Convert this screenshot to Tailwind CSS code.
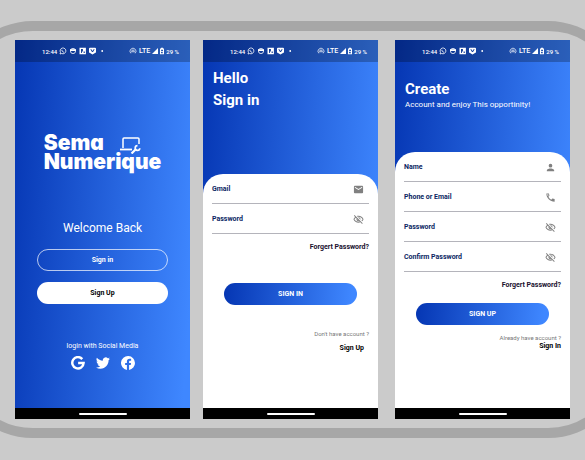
<!DOCTYPE html>
<html lang="en">
<head>
<meta charset="utf-8">
<meta name="viewport" content="width=device-width, initial-scale=1">
<title>Sema Numerique</title>
<script src="https://cdn.jsdelivr.net/npm/@tailwindcss/browser@4"></script>
</head>
<body class="min-h-screen bg-[#cbcbcb] font-['Roboto','Liberation_Sans',sans-serif] text-white">

<svg class="hidden" aria-hidden="true">
  <symbol id="notifications" viewBox="0 0 46 8">
    <g fill="none" stroke="#fff">
      <path d="M1 7l.5-1.6A2.9 2.9 0 1 1 2.700 6.500z" stroke-width=".8"/>
      <path d="M2.900 2.800c0 1.400 1 2.300 2.300 2.500" stroke-width=".9"/>
      <circle cx="14" cy="4" r="2.600" stroke-width=".8"/>
    </g>
    <path d="M11 2.200h6v1.800h-6z" fill="#fff"/>
    <path fill="#fff" fill-rule="evenodd" d="M20.500.7h6.400v6.600h-6.400zM22 2v4h.9V4.500h1V2zm2.600 2.600v1.300h1.200V4.600z"/>
    <path fill="#fff" fill-rule="evenodd" d="M31 .7h5a1 1 0 0 1 1 1V5a1 1 0 0 1-1 1l-2.500 1.400L31 6a1 1 0 0 1-1-1V1.700a1 1 0 0 1 1-1zm.3 1.500 1.700 2.900h1l1.700-2.900h-1.100l-1.100 1.900-1.100-1.900z"/>
    <circle cx="43.200" cy="4" r=".9" fill="#fff"/>
  </symbol>
  <symbol id="hotspot" viewBox="0 0 8 8">
    <g fill="none" stroke="#fff" stroke-width=".7"><path d="M1.800 6.300a3 3 0 1 1 4.400 0"/><path d="M2.900 5.500a1.500 1.500 0 1 1 2.200 0"/></g>
    <circle cx="4" cy="4.500" r=".7" fill="#fff"/>
  </symbol>
  <symbol id="signal" viewBox="0 0 12 8">
    <path fill="#fff" d="M0 7 6 1v6z"/>
    <path fill="#fff" fill-rule="evenodd" d="M9 .8h2v.8h1v5.600H8V1.600h1zM9 2.700v1l1.500.6L9 5v1.200h2V5.400L9.700 4.700 11 4V2.700z"/>
  </symbol>
  <symbol id="mail" viewBox="0 0 24 24"><path d="M20 4H4a2 2 0 0 0-2 2v12a2 2 0 0 0 2 2h16a2 2 0 0 0 2-2V6a2 2 0 0 0-2-2zm0 4-8 5-8-5V6l8 5 8-5z"/></symbol>
  <symbol id="person" viewBox="0 0 24 24"><path d="M12 12a4 4 0 1 0 0-8 4 4 0 0 0 0 8zm0 2c-2.670 0-8 1.340-8 4v2h16v-2c0-2.660-5.330-4-8-4z"/></symbol>
  <symbol id="phone" viewBox="0 0 24 24"><path d="M3 3c0 9.940 8.060 18 18 18v-5.500l-5-1.200-2.400 2.400a15 15 0 0 1-6.300-6.300L9.700 8 8.500 3zM5 5h1.900l.6 2.500-1.300 1.300C5.500 7.600 5.100 6.300 5 5z"/></symbol>
  <symbol id="eye-off" viewBox="0 0 24 24"><path d="M12 6c3.790 0 7.170 2.130 8.820 5.500a9.770 9.770 0 0 1-2.410 3.120l1.410 1.410A11.800 11.800 0 0 0 23 11.500C21.270 7.110 17 4 12 4c-1.270 0-2.490.2-3.640.57l1.650 1.650C10.660 6.090 11.320 6 12 6zm-1.070 1.140L13 9.210c.57.25 1.030.71 1.280 1.280l2.070 2.070c.08-.34.14-.7.14-1.070A4.480 4.480 0 0 0 12 7c-.37 0-.72.05-1.070.14zM2.010 3.870l2.680 2.680A11.740 11.740 0 0 0 1 11.500C2.730 15.890 7 19 12 19c1.520 0 2.980-.29 4.320-.82l3.420 3.420 1.410-1.410L3.420 2.450zm7.500 7.500 2.610 2.610c-.04.01-.08.02-.12.02a2.500 2.500 0 0 1-2.500-2.500zm-3.400-3.400 1.750 1.750a4.600 4.600 0 0 0-.36 1.780 4.500 4.500 0 0 0 6.270 4.140l.98.98c-.88.24-1.800.38-2.750.38-3.790 0-7.170-2.130-8.820-5.500.7-1.430 1.720-2.610 2.930-3.530z"/></symbol>
</svg>

<div class="overflow-hidden pt-[21px]">
<main class="-mr-[43px] -ml-[47px] flex gap-[13px] rounded-[80px] border-[10px] border-[#a7a7a7] py-[9px] pr-12 pl-[52px]">

  <section aria-label="Welcome" class="flex min-w-0 flex-1 flex-col bg-linear-[94deg,#0536b3,#3f87ff_96%]">
    <header class="flex h-[22px] items-center bg-black/25 pr-[11px] pl-[27px] text-[6px] font-medium">
      <span class="w-[17px]">12:44</span>
      <svg class="h-2 w-[46px]" aria-hidden="true"><use href="#notifications"/></svg>
      <svg class="ml-auto h-2 w-2" aria-hidden="true"><use href="#hotspot"/></svg>
      <span class="ml-[2px] text-[7px]">LTE</span>
      <svg class="ml-[2px] h-2 w-3" aria-hidden="true"><use href="#signal"/></svg>
      <span class="ml-[2px] whitespace-nowrap">29 %</span>
    </header>
    <div class="flex min-h-[346px] flex-1 flex-col items-center px-[22px] pt-[71px]">
      <h1 class="relative font-['Inter','Liberation_Sans',sans-serif] text-[21px] leading-[19px] font-black [font-feature-settings:'cv11']"><span class="block">Sema</span><span class="block">Numerique</span>
        <svg class="absolute top-[3px] right-[20px] h-[18px] w-[22px]" viewBox="0 0 22 18" fill="none" stroke="#fff" aria-hidden="true">
          <path d="M4 12V3a1 1 0 0 1 1-1h14a1 1 0 0 1 1 1v5" stroke-width="1.500"/>
          <path d="M1 13.500h12" stroke-width="1.800"/>
          <path d="M12.500 17.500 17 13" stroke-width="2.200"/>
          <path d="M18.500 9.700a2.300 2.300 0 1 0 2.300 2.500" stroke-width="1.700"/>
        </svg>
      </h1>
      <h2 class="mt-[49px] text-[12px] leading-4">Welcome Back</h2>
      <button type="button" class="mt-[13px] h-[22px] w-full rounded-full border border-white/70 pt-px text-[7px] font-bold">Sign in</button>
      <button type="button" class="mt-[11px] h-[22px] w-full rounded-full bg-white pt-px text-[7px] font-bold text-black">Sign Up</button>
      <p class="mt-[38px] text-[7px] leading-2">login with Social Media</p>
      <nav aria-label="Social login" class="mt-[6px] flex gap-[11px]">
        <a href="#google" aria-label="Google"><svg class="h-[14px] w-[14px]" viewBox="0 0 24 24" fill="none" stroke="#fff" stroke-width="4.200" aria-hidden="true"><path d="M19.300 5.300A9.700 9.700 0 1 0 21.600 12H12.200"/></svg></a>
        <a href="#twitter" aria-label="Twitter"><svg class="h-[14px] w-[14px]" viewBox="0 0 24 24" fill="#fff" aria-hidden="true"><path d="M23.950 4.570a10 10 0 0 1-2.820.77 4.960 4.960 0 0 0 2.160-2.720c-.95.550-2 .95-3.130 1.180a4.920 4.920 0 0 0-8.380 4.480C7.690 8.100 4.070 6.130 1.640 3.160a4.920 4.920 0 0 0 1.520 6.570 4.900 4.900 0 0 1-2.230-.61v.06a4.920 4.920 0 0 0 3.950 4.830 5 5 0 0 1-2.210.08 4.940 4.940 0 0 0 4.600 3.420A9.870 9.870 0 0 1 0 19.540a13.990 13.990 0 0 0 7.550 2.210c9.050 0 14-7.500 14-13.980 0-.21 0-.42-.02-.63a9.940 9.940 0 0 0 2.420-2.570z"/></svg></a>
        <a href="#facebook" aria-label="Facebook"><svg class="h-[14px] w-[14px]" viewBox="0 0 24 24" fill="#fff" aria-hidden="true"><path d="M24 12.070a12 12 0 1 0-13.880 11.860v-8.390H7.080v-3.470h3.040V9.430c0-3.010 1.800-4.670 4.540-4.670 1.310 0 2.680.23 2.680.23v2.960h-1.510c-1.490 0-1.960.93-1.960 1.880v2.240h3.330l-.53 3.470h-2.800v8.390A12 12 0 0 0 24 12.070z"/></svg></a>
      </nav>
    </div>
    <footer class="flex h-[11px] items-center justify-center bg-black"><span class="h-[2px] w-12 rounded-full bg-white"></span></footer>
  </section>

  <section aria-label="Sign in" class="flex min-w-0 flex-1 flex-col bg-linear-[94deg,#0536b3,#3f87ff_96%]">
    <header class="flex h-[22px] items-center bg-black/25 pr-[11px] pl-[27px] text-[6px] font-medium">
      <span class="w-[17px]">12:44</span>
      <svg class="h-2 w-[46px]" aria-hidden="true"><use href="#notifications"/></svg>
      <svg class="ml-auto h-2 w-2" aria-hidden="true"><use href="#hotspot"/></svg>
      <span class="ml-[2px] text-[7px]">LTE</span>
      <svg class="ml-[2px] h-2 w-3" aria-hidden="true"><use href="#signal"/></svg>
      <span class="ml-[2px] whitespace-nowrap">29 %</span>
    </header>
    <h2 class="h-28 px-[10px] pt-[5px] text-[15px] leading-[22px] font-bold">Hello<br>Sign in</h2>
    <form class="flex flex-1 flex-col rounded-t-[20px] bg-white px-[9px] text-[7px] font-bold text-[#0b1f63]">
      <div class="flex h-[30px] items-center border-b border-[#b4b4bb] pt-px">
        <label for="gmail">Gmail</label>
        <input id="gmail" type="email" class="min-w-0 flex-1 px-1 outline-none">
        <svg class="mr-[5px] h-[11px] w-[11px] fill-[#808080]" aria-hidden="true"><use href="#mail"/></svg>
      </div>
      <div class="flex h-[30px] items-center border-b border-[#b4b4bb] pt-px">
        <label for="password">Password</label>
        <input id="password" type="password" class="min-w-0 flex-1 px-1 outline-none">
        <svg class="mr-[5px] h-[11px] w-[11px] fill-[#808080]" aria-hidden="true"><use href="#eye-off"/></svg>
      </div>
      <a href="#forgot" class="mt-[9px] self-end leading-2 text-[#20102e]">Forgert Password?</a>
      <button type="button" class="mx-3 mt-8 h-[22px] rounded-full bg-linear-[94deg,#0536b3,#3f87ff_96%] pt-px text-[7px] text-white">SIGN IN</button>
      <p class="mt-[25px] text-right text-[6px] leading-2 font-normal text-[#777]">Don't have account ?</p>
      <a href="#sign-up" class="mt-[6px] mr-[5px] self-end leading-2 text-black">Sign Up</a>
    </form>
    <footer class="flex h-[11px] items-center justify-center bg-black"><span class="h-[2px] w-12 rounded-full bg-white"></span></footer>
  </section>

  <section aria-label="Create account" class="ml-1 flex min-w-0 flex-1 flex-col bg-linear-[94deg,#0536b3,#3f87ff_96%]">
    <header class="flex h-[22px] items-center bg-black/25 pr-[11px] pl-[27px] text-[6px] font-medium">
      <span class="w-[17px]">12:44</span>
      <svg class="h-2 w-[46px]" aria-hidden="true"><use href="#notifications"/></svg>
      <svg class="ml-auto h-2 w-2" aria-hidden="true"><use href="#hotspot"/></svg>
      <span class="ml-[2px] text-[7px]">LTE</span>
      <svg class="ml-[2px] h-2 w-3" aria-hidden="true"><use href="#signal"/></svg>
      <span class="ml-[2px] whitespace-nowrap">29 %</span>
    </header>
    <div class="h-[90px] px-[10px] pt-4">
      <h2 class="text-[15px] leading-[22px] font-bold">Create</h2>
      <p class="text-[8px] leading-[10px]">Account and enjoy This opportinity!</p>
    </div>
    <form class="flex flex-1 flex-col rounded-t-[20px] bg-white px-[9px] text-[7px] font-bold text-[#0b1f63]">
      <div class="flex h-[30px] items-center border-b border-[#b4b4bb] pt-px">
        <label for="name">Name</label>
        <input id="name" type="text" class="min-w-0 flex-1 px-1 outline-none">
        <svg class="mr-[5px] h-[11px] w-[11px] fill-[#808080]" aria-hidden="true"><use href="#person"/></svg>
      </div>
      <div class="flex h-[30px] items-center border-b border-[#b4b4bb] pt-px">
        <label for="contact">Phone or Email</label>
        <input id="contact" type="text" class="min-w-0 flex-1 px-1 outline-none">
        <svg class="mr-[5px] h-[11px] w-[11px] fill-[#808080]" aria-hidden="true"><use href="#phone"/></svg>
      </div>
      <div class="flex h-[30px] items-center border-b border-[#b4b4bb] pt-px">
        <label for="new-password">Password</label>
        <input id="new-password" type="password" class="min-w-0 flex-1 px-1 outline-none">
        <svg class="mr-[5px] h-[11px] w-[11px] fill-[#808080]" aria-hidden="true"><use href="#eye-off"/></svg>
      </div>
      <div class="flex h-[30px] items-center border-b border-[#b4b4bb] pt-px">
        <label for="confirm">Confirm Password</label>
        <input id="confirm" type="password" class="min-w-0 flex-1 px-1 outline-none">
        <svg class="mr-[5px] h-[11px] w-[11px] fill-[#808080]" aria-hidden="true"><use href="#eye-off"/></svg>
      </div>
      <a href="#forgot" class="mt-[9px] self-end leading-2 text-[#20102e]">Forgert Password?</a>
      <button type="button" class="mx-3 mt-[14px] h-[22px] rounded-full bg-linear-[94deg,#0536b3,#3f87ff_96%] pt-px text-[7px] text-white">SIGN UP</button>
      <p class="mt-[9px] text-right text-[6px] leading-2 font-normal text-[#777]">Already have account ?</p>
      <a href="#sign-in" class="self-end leading-2 text-black">Sign In</a>
    </form>
    <footer class="flex h-[11px] items-center justify-center bg-black"><span class="h-[2px] w-12 rounded-full bg-white"></span></footer>
  </section>
</main>
</div>
</body>
</html>
